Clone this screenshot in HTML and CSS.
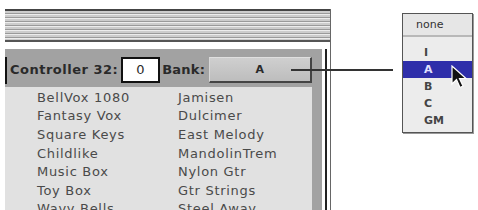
FILE: index.html
```html
<!DOCTYPE html>
<html lang="en">
  <head>
    <meta charset="UTF-8" />
    <title>Bank popup</title>
    <link rel="stylesheet" href="styles.css">
  </head>
  <body>
    <div class="page">
      <div class="window">
        <div class="titlebar"></div>
        <div class="panel">
          <div class="controls">
            <span class="label">Controller 32:</span>
            <div class="field">0</div>
            <span class="label bank">Bank:</span>
            <div class="button">A</div>
          </div>
          <div class="list">
            <div>BellVox 1080</div><div>Jamisen</div>
            <div>Fantasy Vox</div><div>Dulcimer</div>
            <div>Square Keys</div><div>East Melody</div>
            <div>Childlike</div><div>MandolinTrem</div>
            <div>Music Box</div><div>Nylon Gtr</div>
            <div>Toy Box</div><div>Gtr Strings</div>
            <div>Wavy Bells</div><div>Steel Away</div>
          </div>
        </div>
      </div>
      <div class="menu">
        <div class="menu-head">none</div>
        <div class="item">I</div>
        <div class="item selected">A</div>
        <div class="item">B</div>
        <div class="item">C</div>
        <div class="item">GM</div>
        <svg class="cursor" width="18" height="26" viewBox="0 0 18 26">
          <path d="M2 1 L2 19 L6.5 14.5 L10 22.5 L13 21 L9.5 13.5 L16 13.5 Z" fill="#111" stroke="#fff" stroke-width="1.2"/>
        </svg>
      </div>
      <div class="connector"></div>
    </div>
  </body>
</html>
```

FILE: styles.css
```css
* {
  box-sizing: border-box;
  margin: 0;
  padding: 0;
}
body {
  background: #fff;
  width: 478px;
  height: 210px;
  overflow: hidden;
  font-family: "DejaVu Sans", Verdana, sans-serif;
}
.page {
  position: relative;
  display: flex;
  align-items: flex-start;
  padding-left: 5px;
  padding-top: 9px;
  height: 210px;
}
.window {
  width: 326px;
  display: flex;
  flex-direction: column;
  height: 210px;
  border-right: 1px solid #666;
}
.titlebar {
  height: 34px;
  border-top: 2px solid #444;
  border-bottom: 2px solid #555;
  background: repeating-linear-gradient(
    to bottom,
    #cccccc 0,
    #cccccc 2px,
    #9a9a9a 2px,
    #9a9a9a 3px,
    #ececec 3px,
    #ececec 4px
  );
}
.panel {
  margin-top: 7px;
  width: 317px;
  flex: 1;
  background: #a2a2a2;
  padding-right: 10px;
  display: flex;
  flex-direction: column;
  box-shadow: 3px 0 0 #fff, 5px 0 0 #222;
}
.controls {
  height: 38px;
  padding-top: 4px;
  display: flex;
  align-items: center;
  position: relative;
  padding-left: 5px;
  color: #2a2a2a;
  font-size: 13px;
  font-weight: bold;
  letter-spacing: 0.5px;
}
.controls::before {
  content: "";
  position: absolute;
  left: 0;
  top: 8px;
  bottom: 3px;
  width: 2px;
  background: #111;
}
.field {
  width: 39px;
  height: 26px;
  margin-left: 3px;
  background: #fff;
  border: 2px solid #111;
  display: flex;
  align-items: center;
  justify-content: center;
  font-weight: normal;
}
.bank {
  margin-left: 2px;
  letter-spacing: 0.2px;
}
.button {
  flex: 1;
  height: 26px;
  margin-left: 4px;
  background: linear-gradient(#cfcfcf, #bdbdbd);
  border-top: 1px solid #e0e0e0;
  border-left: 1px solid #d8d8d8;
  border-right: 2px solid #444;
  border-bottom: 2px solid #444;
  display: flex;
  align-items: center;
  justify-content: center;
  font-size: 11px;
}
.list {
  flex: 1;
  background: #e1e1e1;
  display: grid;
  grid-template-columns: 141px 1fr;
  grid-auto-rows: 18.6px;
  padding-left: 32px;
  padding-top: 2px;
  color: #4a4a4a;
  font-size: 13px;
  letter-spacing: 0.7px;
  line-height: 18px;
  overflow: hidden;
}
.menu {
  position: relative;
  margin-left: 71px;
  margin-top: 4px;
  width: 71px;
  border: 1px solid #555;
  box-shadow: 1px 1px 0 #999;
  background: #ececec;
  font-size: 11px;
  color: #333;
  padding-bottom: 3px;
}
.menu-head {
  height: 23px;
  line-height: 22px;
  padding-left: 13px;
  border-bottom: 2px solid #b8b8b8;
  background: #e6e6e6;
  margin-bottom: 7px;
}
.item {
  height: 17px;
  line-height: 17px;
  padding-left: 21px;
  font-weight: bold;
  color: #444;
}
.selected {
  background: #2e2eaa;
  color: #e0e0ff;
}
.cursor {
  position: absolute;
  left: 47px;
  top: 51px;
}
.connector {
  position: absolute;
  left: 291px;
  top: 69px;
  width: 102px;
  height: 2px;
  background: #333;
}
```
